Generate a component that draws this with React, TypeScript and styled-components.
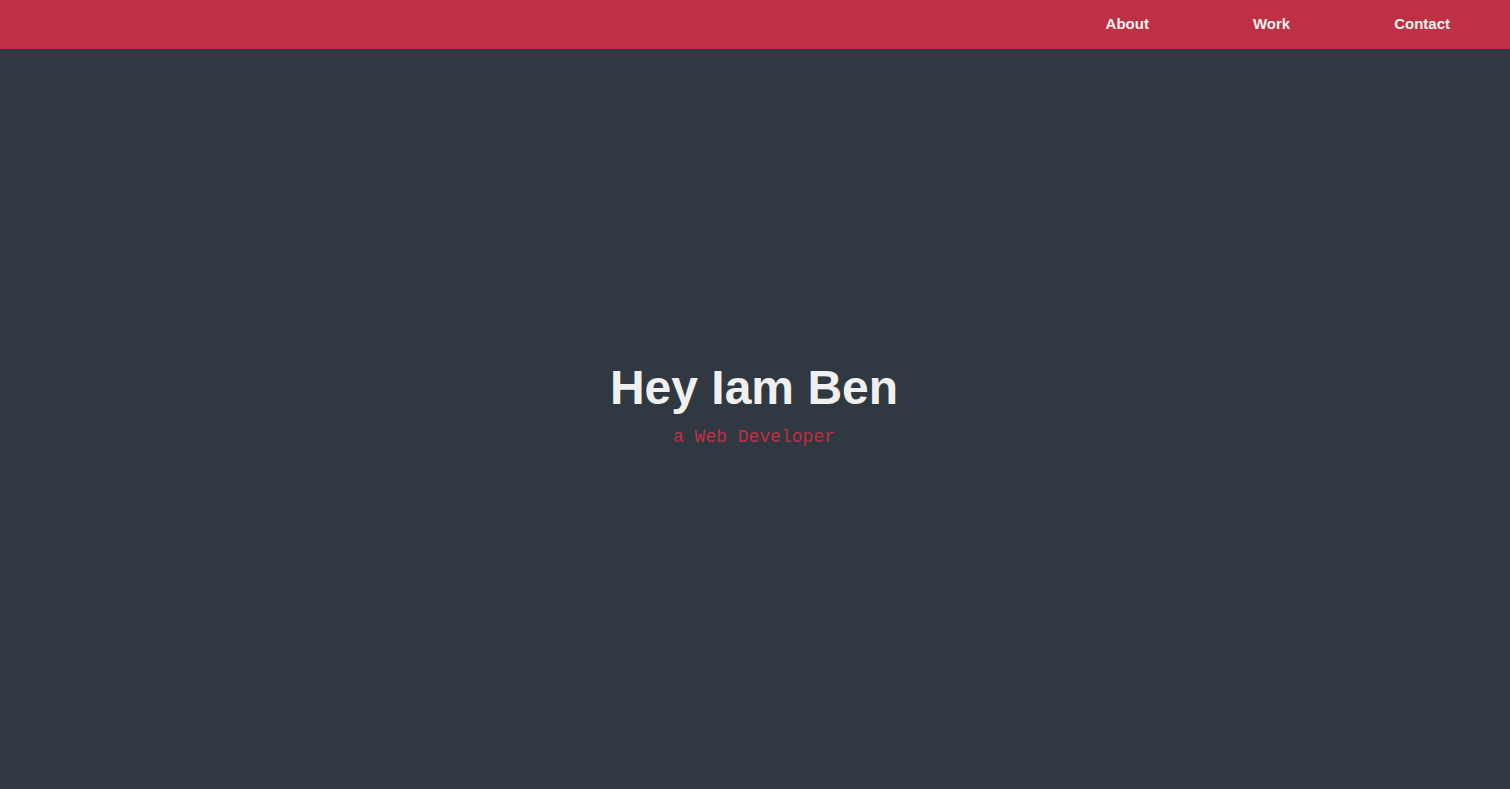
import React from "react";
import styled, { createGlobalStyle } from "styled-components";

const Global = createGlobalStyle`
  html, body { margin: 0; padding: 0; background: #303841; }
  body { font-family: "Liberation Sans", Arial, sans-serif; }
  * { box-sizing: border-box; }
`;

const Page = styled.div`
  min-height: 100vh;
  display: flex;
  flex-direction: column;
  background: #303841;
`;

const NavBar = styled.nav`
  height: 49px;
  background: #be3144;
  display: flex;
  align-items: center;
  justify-content: flex-end;
  padding: 0 60px 2px 0;
`;

const NavList = styled.ul`
  list-style: none;
  margin: 0;
  padding: 0;
  display: flex;
  gap: 104px;
`;

const NavLink = styled.a`
  color: #f0f0f0;
  font-size: 15px;
  font-weight: bold;
  text-decoration: none;
`;

const Hero = styled.section`
  flex: 1;
  display: flex;
  flex-direction: column;
  align-items: center;
  justify-content: center;
  padding: 0 2px 29px 0;
`;

const Title = styled.h1`
  margin: 0 0 11px;
  color: #f0f0f0;
  font-size: 48px;
  font-weight: bold;
  line-height: 1.15;
`;

const Subtitle = styled.p`
  margin: 0;
  color: #be3144;
  font-family: "Liberation Mono", "Courier New", monospace;
  font-size: 18px;
  line-height: 1.3;
`;

export default function App() {
  return (
    <>
      <Global />
      <Page>
        <NavBar>
          <NavList>
            <li><NavLink href="#about">About</NavLink></li>
            <li><NavLink href="#work">Work</NavLink></li>
            <li><NavLink href="#contact">Contact</NavLink></li>
          </NavList>
        </NavBar>
        <Hero>
          <Title>Hey Iam Ben</Title>
          <Subtitle>a Web Developer</Subtitle>
        </Hero>
      </Page>
    </>
  );
}
